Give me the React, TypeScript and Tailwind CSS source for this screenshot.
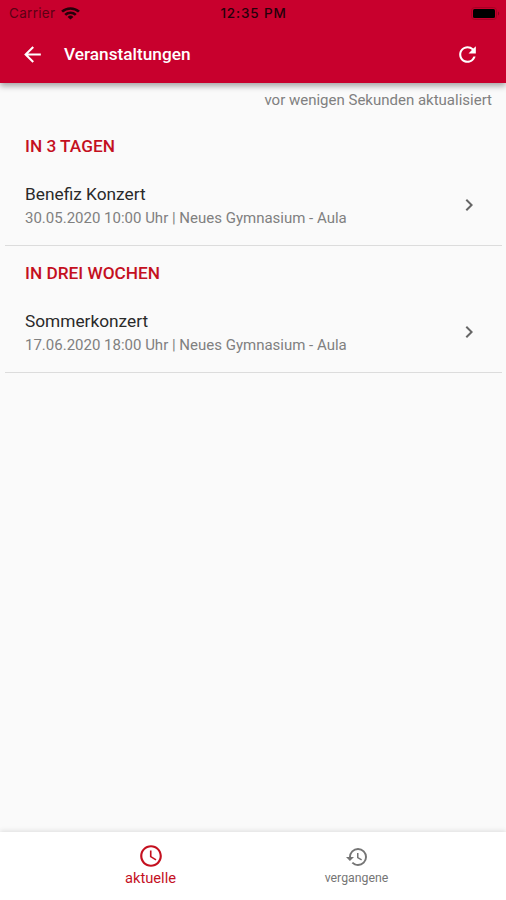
import { MdAccessTime, MdArrowBack, MdChevronRight, MdHistory, MdRefresh } from 'react-icons/md'

interface Event {
  id: number
  heading: string
  title: string
  details: string
}

const events: Event[] = [
  {
    id: 1,
    heading: 'IN 3 TAGEN',
    title: 'Benefiz Konzert',
    details: '30.05.2020 10:00 Uhr | Neues Gymnasium - Aula',
  },
  {
    id: 2,
    heading: 'IN DREI WOCHEN',
    title: 'Sommerkonzert',
    details: '17.06.2020 18:00 Uhr | Neues Gymnasium - Aula',
  },
]

function StatusBar() {
  return (
    <div className="grid h-[27px] grid-cols-3 items-center pr-[6px] pl-[9px] font-['Inter',sans-serif] text-[13.5px] leading-none text-[#26000a]">
      <div className="flex items-center gap-[6px]">
        <span className="tracking-[0.3px] text-[#5c0014]">Carrier</span>
        <svg className="h-[13px] w-[19px]" viewBox="0 0 18 13" preserveAspectRatio="none" fill="none" stroke="currentColor" strokeWidth="2.5">
          <path d="M1 4.7a11.4 11.4 0 0 1 16 0" />
          <path d="M4 7.9a7.1 7.1 0 0 1 10 0" />
          <path d="M9 12.6 6.2 9.9a4 4 0 0 1 5.6 0z" fill="currentColor" stroke="none" />
        </svg>
      </div>
      <span className="pr-[2px] text-center font-medium tracking-[0.85px] whitespace-nowrap">12:35 PM</span>
      <svg className="h-[13px] w-[29px] justify-self-end" viewBox="0 0 29 13">
        <rect x="0.5" y="0.5" width="25" height="12" rx="3" fill="none" stroke="#a80025" />
        <rect x="2" y="2" width="22" height="9" rx="1.5" fill="#000" />
        <path d="M27 4.5v4c1.6-.6 1.6-3.400 0-4z" fill="#8c001e" />
      </svg>
    </div>
  )
}

function EventItem({ event }: { event: Event }) {
  return (
    <section className="mr-[4px] ml-[5px] h-[127px] border-b border-[#dcdcdc] pt-[17px] pr-[21px] pl-[20px]">
      <h2 className="text-[17.25px] leading-[20px] font-medium text-[#c4101f]">{event.heading}</h2>
      <div className="mt-[26px] flex items-start justify-between">
        <div>
          <h3 className="text-[17.3px] leading-[24px] text-[#2a2a2a]">{event.title}</h3>
          <p className="mt-px text-[15px] leading-[22px] text-[#808080]">{event.details}</p>
        </div>
        <MdChevronRight className="mt-[11px] size-[24px] text-[#666]" />
      </div>
    </section>
  )
}

export default function App() {
  return (
    <div className="flex h-screen flex-col bg-[#fafafa] font-['Roboto',sans-serif]">
      <header className="z-10 h-[83px] shrink-0 bg-[#c8002d] shadow-[0_3px_6px_rgba(0,0,0,0.35)]">
        <StatusBar />
        <div className="flex h-[55px] items-center pr-[26px] pl-[20px] text-white">
          <MdArrowBack className="size-[25px]" />
          <h1 className="mb-[2px] ml-[19px] flex-1 text-[17.25px] leading-[24px] font-medium">Veranstaltungen</h1>
          <MdRefresh className="size-[25px]" />
        </div>
      </header>

      <main className="flex-1">
        <p className="h-[36px] pt-[6px] pr-[14px] text-right text-[15px] leading-[22px] text-[#808080]">
          vor wenigen Sekunden aktualisiert
        </p>
        {events.map((event) => (
          <EventItem key={event.id} event={event} />
        ))}
      </main>

      <nav className="flex h-[68px] shrink-0 justify-center bg-white pl-px shadow-[0_-1px_5px_rgba(0,0,0,0.12)]">
        <button type="button" className="flex w-[206px] flex-col items-center pt-[11px] text-[#c4101f]">
          <MdAccessTime className="size-[26px]" />
          <span className="text-[14.7px] leading-[18px]">aktuelle</span>
        </button>
        <button type="button" className="flex w-[206px] flex-col items-center pt-[13px] text-[#757575]">
          <MdHistory className="size-[24px]" />
          <span className="text-[12.3px] leading-[18px]">vergangene</span>
        </button>
      </nav>
    </div>
  )
}
